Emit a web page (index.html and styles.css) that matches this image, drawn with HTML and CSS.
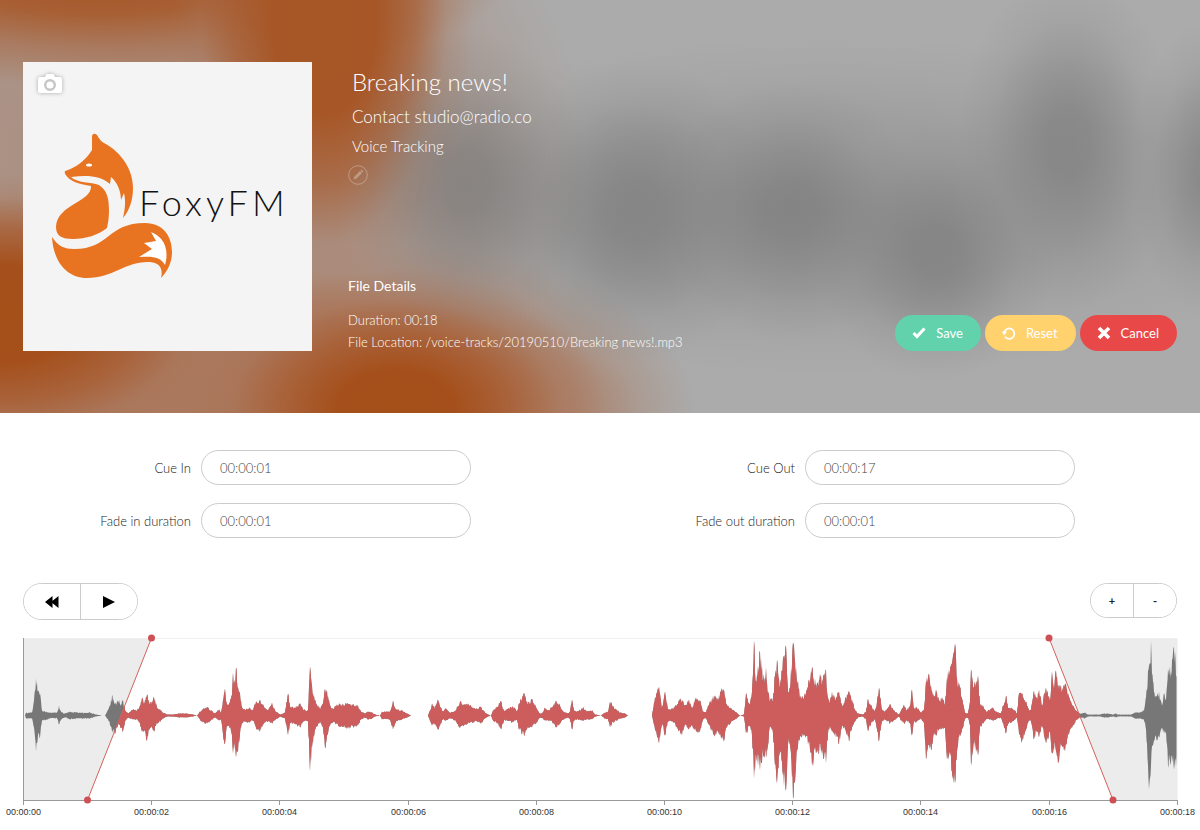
FILE: index.html
```html
<!DOCTYPE html>
<html lang="en">
<head>
  <meta charset="UTF-8" />
  <meta name="viewport" content="width=device-width, initial-scale=1.0" />
  <title>Breaking news!</title>
  <link rel="stylesheet" href="styles.css">
</head>
<body>
  <header class="hero">
    <div class="cover">
      <button type="button" class="cover-btn" aria-label="Change artwork">
        <svg width="24" height="20" viewBox="0 0 24 20">
          <path fill="#fff" d="M2 3h5l1-2q.4-1 1.500-1h5q1.100 0 1.500 1l1 2h5q2 0 2 2v12q0 2-2 2H2q-2 0-2-2V5q0-2 2-2z"/>
          <circle cx="12" cy="11" r="4.800" fill="#fff" stroke="#c6c6c6" stroke-width="2.400"/>
        </svg>
      </button>
      <svg class="logo" viewBox="0 0 289 289" role="img" aria-label="FoxyFM">
        <g fill="#e87422">
          <path d="M69 75C69 71 72 71 74 73C76 77 79 80 81 81C98 90 110 107 110 126C110 139 106 149 100 156C102 147 103 140 101 131L98 138C98 129 94 120 88 115L87 122C77 113 63 113 48 115L43 113C41 110 41 109 45 108C56 104 64 96 69 88Z"/>
          <path d="M42 111C45 120 58 122 68 124C69 140 34 142 33 165C33 174 39 177 50 177C63 177 75 173 84 166Q86 157 86 150C86 138 85 129 76 123C68 120 54 121 48 115Z"/>
          <path d="M29 175C35 184 41 187 51 187C87 187 84 161 122 161C141 161 149 175 149 190C149 201 144 210 138 216C140 208 138 201 127 200C102 199 91 216 64 216C42 216 30 197 29 175Z"/>
        </g>
        <path fill="#fff" d="M128 170C139 174 147 185 142 203C137 195 131 194 116 195L129 187L121 181L133 179Z"/>
        <ellipse cx="66" cy="103" rx="3" ry="1.600" fill="#fff"/>
        <text x="116" y="154" class="logo-text">FoxyFM</text>
      </svg>
    </div>

    <div class="info">
      <h1 class="title">Breaking news!</h1>
      <p class="artist">Contact studio@radio.co</p>
      <p class="album">Voice Tracking</p>
      <button type="button" class="edit-btn" aria-label="Edit details">
        <svg width="20" height="20" viewBox="0 0 20 20">
          <circle cx="10" cy="10" r="9.300" fill="none" stroke="currentColor"/>
          <path fill="currentColor" d="M5.500 14.500l1-3 5.500-5.500 2 2-5.500 5.500zM12.500 5.500l1-1 2 2-1 1z"/>
        </svg>
      </button>
      <section class="details">
        <h2>File Details</h2>
        <p>Duration: 00:18</p>
        <p>File Location: /voice-tracks/20190510/Breaking news!.mp3</p>
      </section>
    </div>

    <div class="actions">
      <button type="button" class="btn btn-save">
        <svg width="14" height="12" viewBox="0 0 14 12"><path fill="none" stroke="#fff" stroke-width="3" d="M1.500 6l3.500 3.500 7.500-8"/></svg>
        Save
      </button>
      <button type="button" class="btn btn-reset">
        <svg width="14" height="14" viewBox="0 0 14 14"><path fill="none" stroke="#fff" stroke-width="1.800" d="M3 10.800a5.200 5.200 0 1 0-.9-4.300"/><path fill="#fff" d="M0 5.500l5 .3-3 3.700z"/></svg>
        Reset
      </button>
      <button type="button" class="btn btn-cancel">
        <svg width="14" height="14" viewBox="0 0 14 14"><path fill="none" stroke="#fff" stroke-width="3.600" d="M2 2l10 10M12 2L2 12"/></svg>
        Cancel
      </button>
    </div>
  </header>

  <main>
    <form class="cues">
      <div class="field">
        <label for="cueIn">Cue In</label>
        <input type="text" id="cueIn" value="00:00:01">
      </div>
      <div class="field">
        <label for="cueOut">Cue Out</label>
        <input type="text" id="cueOut" value="00:00:17">
      </div>
      <div class="field">
        <label for="fadeIn">Fade in duration</label>
        <input type="text" id="fadeIn" value="00:00:01">
      </div>
      <div class="field">
        <label for="fadeOut">Fade out duration</label>
        <input type="text" id="fadeOut" value="00:00:01">
      </div>
    </form>

    <div class="controls">
      <div class="group group-play">
        <button type="button" aria-label="Rewind">
          <svg width="14" height="12" viewBox="0 0 14 12"><path d="M7.500 0v12L0 6zM13.500 0v12L6 6z"/></svg>
        </button>
        <button type="button" aria-label="Play">
          <svg width="14" height="12" viewBox="0 0 14 12"><path d="M1 0l12 6-12 6z"/></svg>
        </button>
      </div>
      <div class="group group-zoom">
        <button type="button">+</button>
        <button type="button">-</button>
      </div>
    </div>

    <svg class="wave" viewBox="0 0 1200 192" role="img" aria-label="Waveform">
      <defs>
        <clipPath id="active"><path d="M151.500 10H1049L1113 172H87.500z"/></clipPath>
      </defs>
      <path class="muted" d="M24 10H151.500L87.500 172H24zM1049 10H1177.500V172H1113z"/>
      <path class="top-line" d="M24 10.500H1177"/>
      <path class="peaks peaks-off"/>
      <path class="peaks peaks-on" clip-path="url(#active)"/>
      <path class="axis-line" d="M23.500 10V177"/>
      <path class="axis-line" d="M23 172.500H1178"/>
      <g id="ticks"></g>
      <path class="fade" d="M151.500 10L87.500 172M1049 10L1113 172"/>
      <g class="handles">
        <circle cx="151.500" cy="10" r="3.500"/>
        <circle cx="87.500" cy="172" r="3.500"/>
        <circle cx="1049" cy="10" r="3.500"/>
        <circle cx="1113" cy="172" r="3.500"/>
      </g>
    </svg>
  </main>

  <script src="script.js"></script>
</body>
</html>
```
FILE: styles.css
```css
:root {
  --save: #62d2ac;
  --reset: #ffd26d;
  --cancel: #e94848;
  --wave: #cd5c5c;
  --wave-off: #777;
  --border: #ccc;
  --text: #444;
  /* soft grey spot, fades out like a blur */
  --spot: rgba(118, 118, 118, 0.6), rgba(118, 118, 118, 0.56) 20%, rgba(118, 118, 118, 0.36) 45%, rgba(118, 118, 118, 0.12) 72%, rgba(118, 118, 118, 0);
}

* {
  box-sizing: border-box;
}

body {
  margin: 0;
  font-family: Lato, "Open Sans", sans-serif;
  font-size: 13px;
  color: var(--text);
  background: #fff;
}

h1, h2, p {
  margin: 0;
  font-weight: 400;
}

button {
  font-family: inherit;
  cursor: pointer;
}

/* header */
.hero {
  display: flex;
  align-items: flex-start;
  gap: 36px;
  padding: 62px 23px 60px;
  color: #fff;
  background:
    radial-gradient(ellipse 120px 150px at 39% 44%, var(--spot)),
    radial-gradient(ellipse 140px 150px at 53% 51%, var(--spot)),
    radial-gradient(ellipse 130px 130px at 66% 51%, var(--spot)),
    radial-gradient(ellipse 120px 130px at 78% 61%, var(--spot)),
    radial-gradient(ellipse 110px 170px at 89% 34%, var(--spot)),
    radial-gradient(ellipse 80px 150px at 101% 41%, var(--spot)),
    radial-gradient(ellipse 520px 170px at 69% 50%, rgba(130, 130, 130, 0.45), rgba(130, 130, 130, 0.3) 50%, rgba(130, 130, 130, 0.1) 78%, rgba(130, 130, 130, 0)),
    radial-gradient(ellipse 210px 140px at 33% 99%, #a54f19, #a5501c 28%, rgba(168, 88, 42, 0.75) 52%, rgba(170, 110, 78, 0.3) 78%, rgba(171, 130, 110, 0)),
    radial-gradient(ellipse 230px 140px at 0% 76%, #a54f19, #a5501c 35%, rgba(168, 88, 42, 0.7) 62%, rgba(170, 110, 78, 0.25) 84%, rgba(171, 130, 110, 0)),
    radial-gradient(ellipse 150px 270px at 27% 5%, #a75625, #a75727 35%, rgba(168, 92, 48, 0.7) 60%, rgba(170, 115, 85, 0.25) 82%, rgba(171, 130, 110, 0)),
    radial-gradient(ellipse 420px 110px at 8% -6%, #a75625, rgba(167, 86, 37, 0.85) 35%, rgba(168, 92, 48, 0.45) 65%, rgba(171, 130, 110, 0)),
    radial-gradient(ellipse 460px 150px at 15% 100%, rgba(170, 120, 92, 0.95), rgba(170, 120, 92, 0.9) 65%, rgba(171, 150, 140, 0)),
    radial-gradient(ellipse 300px 170px at 33% 100%, rgba(170, 120, 92, 0.9), rgba(170, 125, 100, 0.7) 60%, rgba(171, 150, 140, 0)),
    radial-gradient(ellipse 420px 380px at 14% 40%, rgba(170, 122, 96, 0.7), rgba(170, 130, 110, 0.5) 60%, rgba(171, 171, 171, 0)),
    #ababab;
}

.cover {
  display: grid;
  flex: 0 0 289px;
  height: 289px;
  background: #f4f4f4;
}

.cover-btn,
.logo {
  grid-area: 1 / 1;
}

.cover-btn {
  z-index: 1;
  justify-self: start;
  align-self: start;
  margin: 12px 15px;
  padding: 0;
  border: none;
  background: none;
}

.cover-btn svg {
  display: block;
  filter: drop-shadow(0 0 2px rgba(0, 0, 0, 0.3));
}

.logo-text {
  font-family: Lato, sans-serif;
  font-size: 36px;
  font-weight: 300;
  letter-spacing: 4px;
  fill: #111;
}

.info {
  flex: 1;
}

.title {
  padding-left: 4px;
  font-size: 24px;
  font-weight: 300;
  line-height: 40px;
}

.artist {
  padding-left: 4px;
  font-size: 17px;
  font-weight: 300;
  line-height: 30px;
}

.album {
  padding-left: 4px;
  font-size: 15px;
  font-weight: 300;
  line-height: 28px;
}

.edit-btn {
  display: block;
  margin: 5px 0 0;
  padding: 0;
  border: none;
  background: none;
  color: rgba(255, 255, 255, 0.3);
}

.edit-btn svg {
  display: block;
}

.details {
  margin-top: 90px;
  font-weight: 300;
  line-height: 22px;
}

.details p {
  font-weight: 300;
}

.details h2 {
  margin-bottom: 12px;
  font-size: 14px;
}

.actions {
  display: flex;
  align-self: flex-end;
  gap: 4px;
  margin-bottom: 2px;
}

.btn {
  display: flex;
  align-items: center;
  gap: 10px;
  height: 36px;
  padding: 0 18px 0 17px;
  border: none;
  border-radius: 18px;
  font-size: 13px;
  color: #fff;
}

.btn-save {
  background: var(--save);
}

.btn-reset {
  background: var(--reset);
}

.btn-cancel {
  background: var(--cancel);
}

/* cue form */
.cues {
  display: grid;
  grid-template-columns: 1fr 1fr;
  gap: 18px 156px;
  padding: 37px 125px 45px 23px;
}

.field {
  display: flex;
  align-items: center;
  gap: 10px;
}

.field label {
  flex: 0 0 168px;
  font-weight: 300;
  text-align: right;
  color: #222;
}

.field input {
  flex: 1;
  min-width: 0;
  height: 35px;
  padding: 0 18px;
  border: 1px solid var(--border);
  border-radius: 18px;
  font-family: inherit;
  font-size: 13px;
  font-weight: 300;
  color: var(--text);
  background: #fff;
}

/* transport and zoom */
.controls {
  display: flex;
  align-items: flex-start;
  justify-content: space-between;
  padding: 0 23px;
}

.group {
  display: flex;
  border: 1px solid var(--border);
  border-radius: 19px;
  overflow: hidden;
}

.group button {
  display: flex;
  flex: 1;
  align-items: center;
  justify-content: center;
  padding: 0;
  border: none;
  background: #fff;
  font-size: 11px;
  font-weight: 700;
  color: #222;
}

.group button + button {
  border-left: 1px solid var(--border);
}

.group-play {
  width: 115px;
  height: 37px;
}

.group-zoom {
  width: 87px;
  height: 35px;
}

/* waveform */
.wave {
  display: block;
  width: 100%;
  margin-top: 8px;
}

.muted {
  fill: #ececec;
}

.top-line {
  stroke: #f0f0f0;
}

.peaks-off {
  fill: var(--wave-off);
}

.peaks-on {
  fill: var(--wave);
}

.axis-line {
  stroke: #999;
}

.axis-label {
  font-family: "Liberation Sans", Arial, sans-serif;
  font-size: 9px;
  text-anchor: middle;
  fill: #333;
}

.fade {
  fill: none;
  stroke: #d4625c;
}

.handles {
  fill: #cd5055;
}
```
FILE: script.js
```js
// envelope of the recording: x, height above the middle, height below it
const peaks = [
  [25,0,0],[26,3,3],[32,3,3],[34,15,12],[36,37,36],[38,25,20],[40,22,22],[42,5,5],[45,4,5],[50,3,3],[57,3,3],[59,10,9],[61,4,4],
  [65,2,2],[70,4,4],[80,3,3],[90,3,3],[96,1,1],[102,0,0],[105,0,0],[109,8,6],[112,20,16],[115,12,19],[118,15,10],[121,12,12],
  [123,16,16],[125,6,6],[128,2,2],[133,6,4],[137,5,4],[140,10,8],[142,18,16],[144,13,15],[147,21,25],[149,12,14],[152,14,12],
  [154,18,16],[157,8,8],[160,6,6],[163,3,3],[167,1,1],[173,1,1],[180,2,2],[187,2,2],[193,1,1],[197,0,0],[200,4,4],[203,7,7],
  [207,8,8],[211,5,5],[215,2,2],[219,6,5],[221,3,4],[224,22,25],[225,27,28],[227,10,10],[230,14,12],[232,20,20],[233,43,38],
  [235,30,30],[236,48,42],[238,28,36],[240,22,18],[242,8,8],[246,6,6],[250,8,7],[253,5,5],[256,14,12],[260,16,16],[264,8,8],
  [268,6,6],[272,13,8],[275,5,5],[280,1,1],[285,3,3],[288,22,20],[290,9,8],[295,8,8],[300,12,12],[303,6,6],[308,5,6],
  [310,49,56],[312,30,32],[315,15,14],[320,7,7],[323,12,12],[325,27,33],[327,25,20],[330,10,10],[333,6,6],[336,10,9],
  [340,11,11],[348,12,13],[358,10,10],[361,4,4],[365,2,2],[368,4,4],[372,3,3],[375,1,1],[380,0,0],[382,4,4],[390,4,4],
  [393,15,14],[396,6,6],[402,5,4],[407,2,2],[411,0,0],[428,0,0],[430,5,5],[432,12,10],[435,8,8],[438,16,14],[441,8,8],
  [443,4,4],[446,7,5],[450,3,3],[455,4,5],[457,9,8],[460,14,12],[465,10,9],[468,12,8],[473,7,7],[477,7,6],[481,9,8],
  [485,3,3],[488,1,1],[491,0,0],[493,5,5],[497,9,8],[501,14,14],[504,5,5],[508,7,5],[512,9,7],[515,7,5],[517,4,4],
  [519,12,14],[524,22,20],[528,12,12],[532,16,12],[536,8,8],[540,2,2],[543,3,3],[545,8,5],[548,5,5],[552,8,6],[556,15,12],
  [560,10,8],[563,4,4],[568,2,2],[570,4,4],[572,16,14],[574,5,5],[578,4,4],[583,8,5],[587,4,4],[592,5,4],[595,1,1],
  [601,0,0],[605,3,3],[608,4,4],[610,14,12],[613,9,7],[617,6,5],[620,3,3],[625,2,2],[628,0,0],[652,0,0],[655,18,14],
  [659,29,28],[662,7,7],[665,24,20],[668,6,6],[673,7,6],[679,15,16],[682,16,20],[685,10,10],[689,16,14],[692,8,10],
  [696,18,16],[700,15,16],[703,4,4],[706,3,3],[708,10,8],[712,17,16],[715,20,20],[718,17,16],[722,26,24],[724,26,26],
  [726,12,12],[730,8,8],[735,4,4],[740,0,0],[744,1,1],[746,22,18],[750,11,11],[752,24,20],[754,75,63],[756,35,40],
  [758,50,50],[760,64,55],[763,36,38],[766,48,42],[768,24,30],[770,15,10],[773,18,18],[775,40,50],[777,56,68],[780,30,36],
  [783,58,60],[786,70,75],[788,24,28],[790,28,30],[793,73,83],[796,48,50],[798,35,30],[801,16,20],[805,22,20],[810,36,34],
  [812,48,50],[816,32,38],[821,40,36],[826,45,48],[828,18,18],[830,14,10],[832,24,16],[836,18,22],[839,24,28],[842,10,10],
  [845,16,14],[849,24,26],[852,16,12],[855,6,6],[858,2,2],[863,1,1],[866,4,4],[868,17,16],[871,10,8],[875,4,4],[877,14,14],
  [879,28,26],[882,6,6],[885,4,4],[890,12,8],[893,6,6],[899,1,1],[901,5,5],[904,11,8],[907,5,5],[910,10,8],[912,26,20],
  [914,6,6],[916,9,7],[921,3,3],[924,6,8],[926,34,44],[929,42,30],[931,30,34],[934,18,20],[936,26,20],[939,14,14],
  [942,18,14],[945,12,12],[947,38,44],[949,46,40],[952,52,56],[955,72,68],[957,38,36],[960,28,20],[963,12,12],[965,3,3],
  [968,2,2],[970,14,10],[971,46,50],[974,28,28],[978,40,40],[980,12,12],[983,10,8],[986,4,4],[990,6,4],[993,8,5],
  [996,4,4],[1001,2,2],[1003,10,8],[1006,20,18],[1008,8,8],[1011,8,7],[1015,5,4],[1017,2,2],[1019,22,18],[1022,22,26],
  [1026,14,14],[1029,5,5],[1031,6,6],[1034,25,24],[1037,18,16],[1039,26,22],[1042,10,10],[1044,22,20],[1046,28,28],
  [1050,16,16],[1052,44,38],[1054,26,34],[1056,45,36],[1058,28,48],[1061,30,30],[1065,32,36],[1067,26,24],[1070,16,14],
  [1074,8,10],[1076,5,5],[1080,2,2],[1085,3,3],[1088,1,1],[1100,1,1],[1104,2,2],[1108,2,2],[1113,1,1],[1116,2,2],
  [1118,1,1],[1131,1,1],[1135,3,3],[1140,3,3],[1144,5,5],[1146,18,14],[1148,45,50],[1149,50,74],[1151,75,50],[1153,34,30],
  [1155,18,22],[1157,20,24],[1159,24,22],[1162,10,12],[1164,22,18],[1166,16,16],[1168,46,50],[1171,44,46],[1174,68,54],[1177,40,50]
];

const MIDDLE = 87.5;

// repeatable noise so the outline looks sampled
function noise(n) {
  const v = Math.sin(n * 12.9898) * 43758.5453;
  return v - Math.floor(v);
}

function wavePath() {
  const top = [];
  const bottom = [];
  for (let i = 0; i < peaks.length - 1; i++) {
    const [x1, up1, down1] = peaks[i];
    const [x2, up2, down2] = peaks[i + 1];
    for (let x = x1; x < x2; x += 0.5) {
      const t = (x - x1) / (x2 - x1);
      const up = (up1 + (up2 - up1) * t) * (x === x1 ? 1 : 0.75 + 0.35 * noise(x));
      const down = (down1 + (down2 - down1) * t) * (x === x1 ? 1 : 0.75 + 0.35 * noise(x + 7));
      top.push(`${x} ${(MIDDLE - up).toFixed(1)}`);
      bottom.unshift(`${x} ${(MIDDLE + down).toFixed(1)}`);
    }
  }
  return "M" + top.concat(bottom).join("L") + "z";
}

document.querySelectorAll(".peaks").forEach(path => path.setAttribute("d", wavePath()));

let ticks = "";
for (let s = 0; s <= 18; s += 2) {
  const x = Math.round(23 + s * 64.1) + 0.5;
  ticks += `<path class="axis-line" d="M${x} 172V177"/>`;
  ticks += `<text class="axis-label" x="${x}" y="187">00:00:${String(s).padStart(2, "0")}</text>`;
}
document.getElementById("ticks").innerHTML = ticks;
```
